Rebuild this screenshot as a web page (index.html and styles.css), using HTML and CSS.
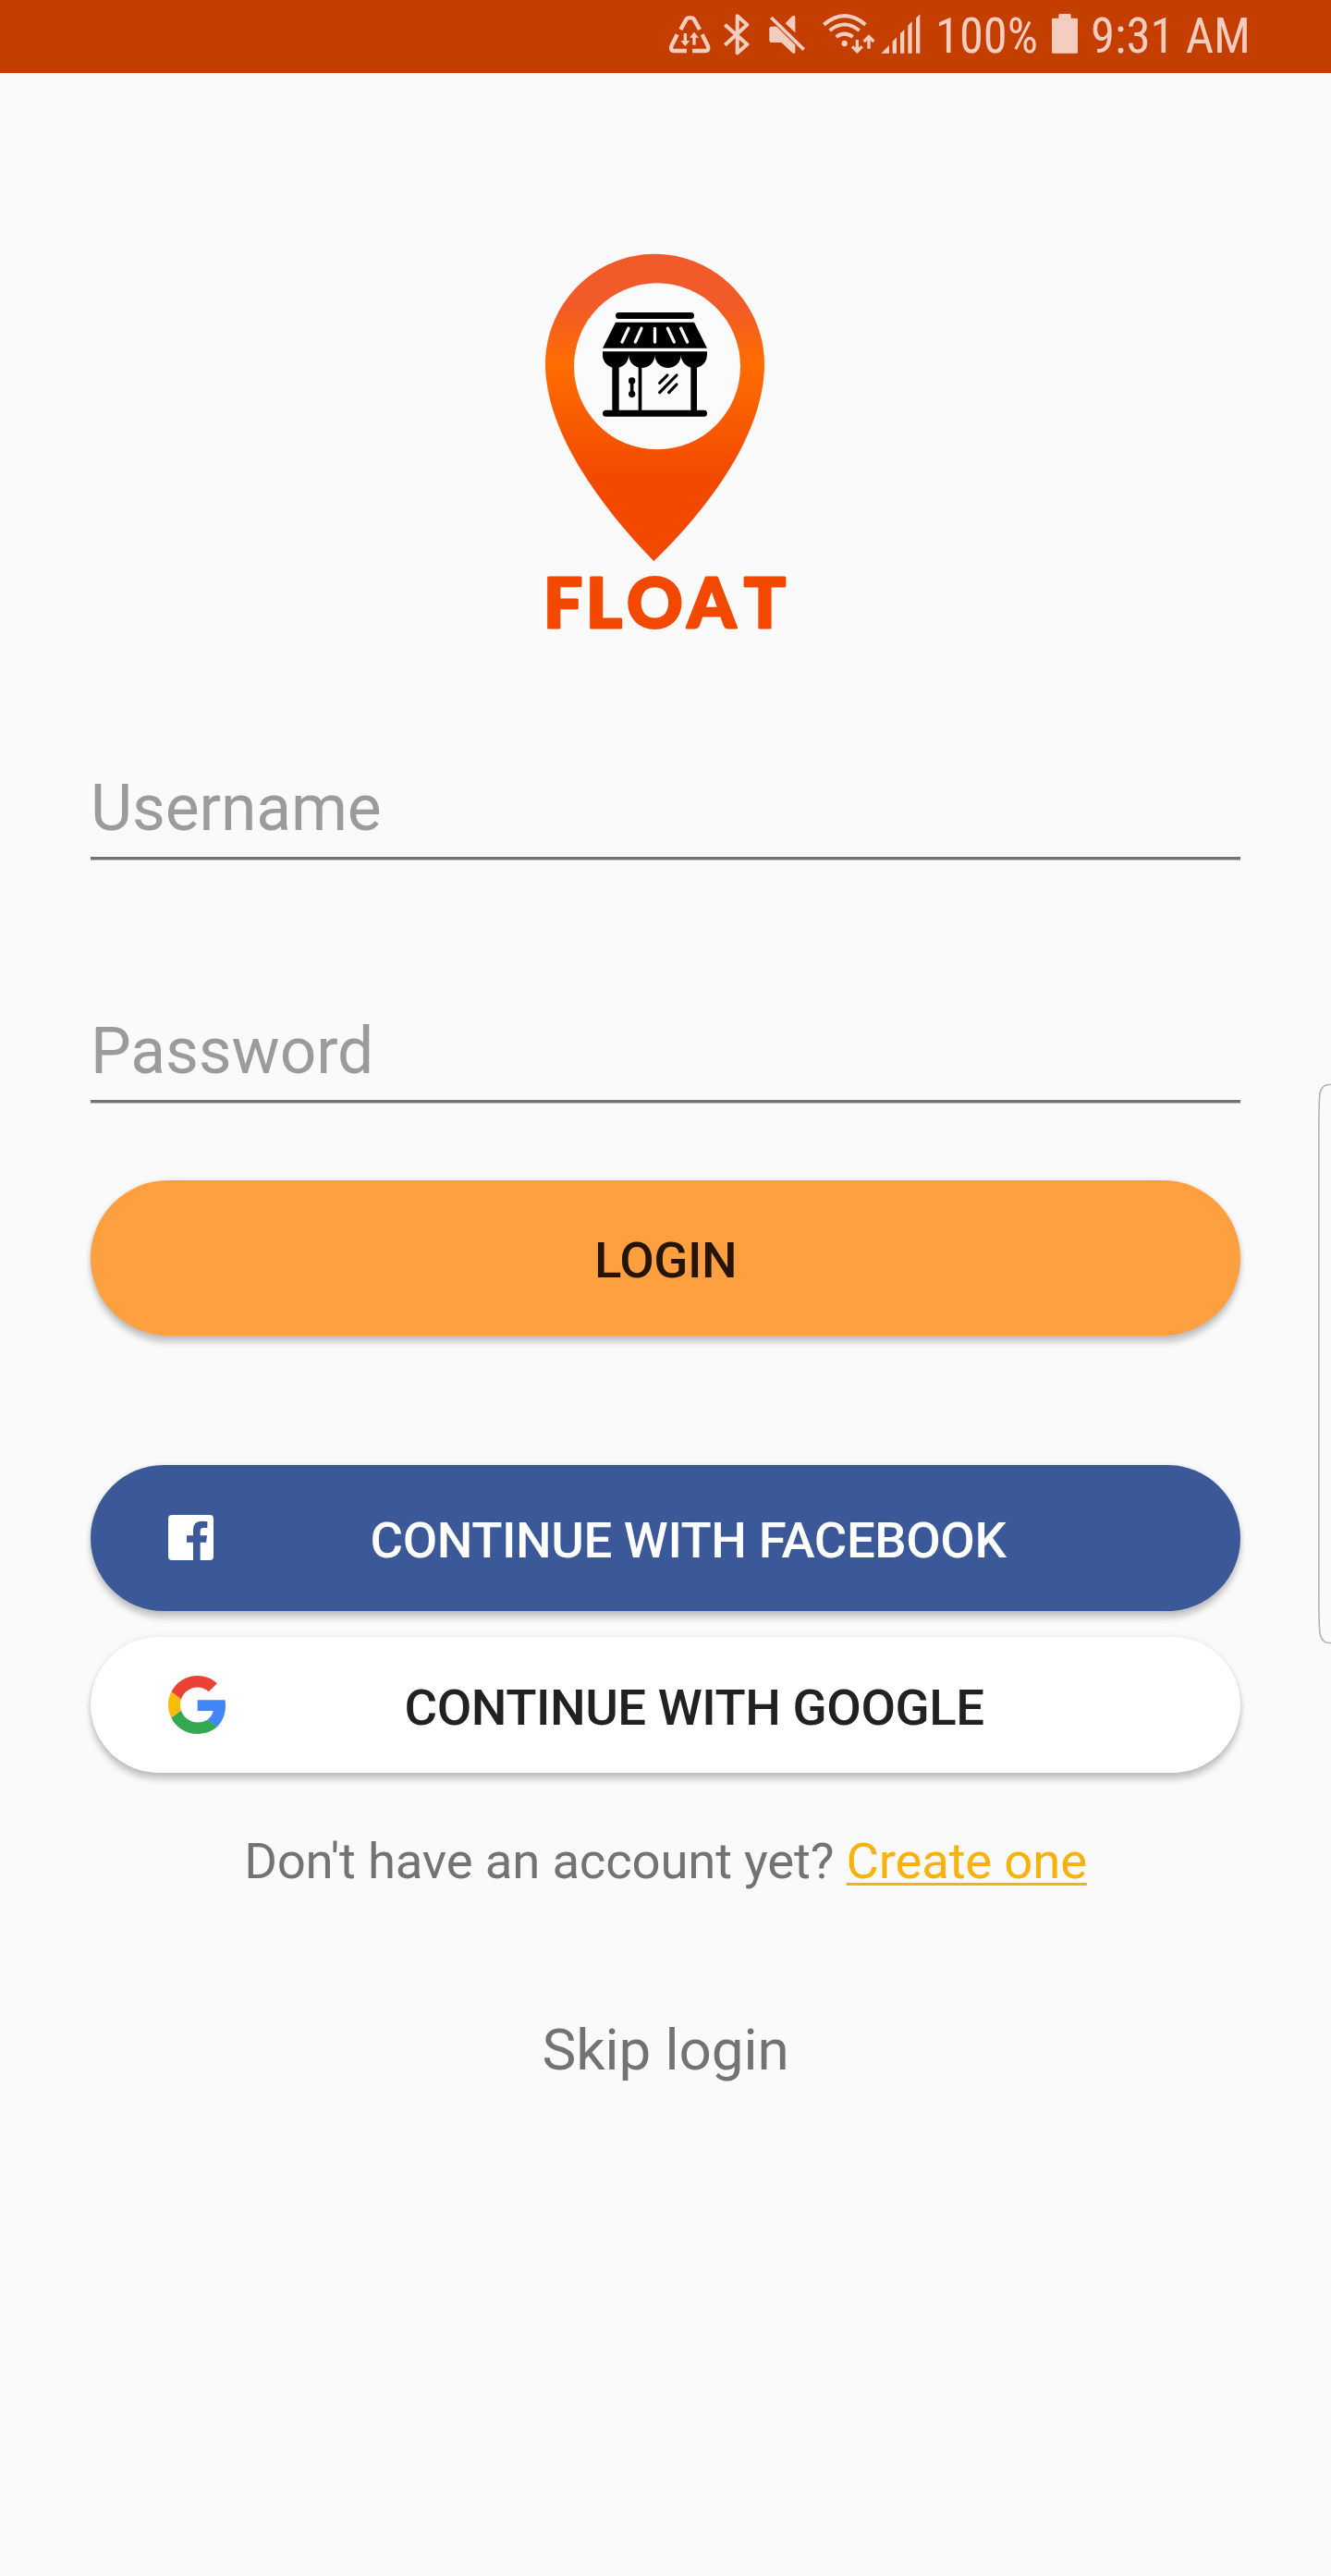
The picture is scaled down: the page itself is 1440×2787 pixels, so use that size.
FILE: index.html
```html
<!DOCTYPE html>
<html lang="en">
<head>
<meta charset="utf-8">
<title>Float</title>
<link rel="stylesheet" href="styles.css">
</head>
<body>
<header class="status-bar">
  <svg class="status-icon" width="59" height="79" viewBox="72 0 177 237" fill="none" stroke="currentColor" stroke-width="13">
    <path d="M109 96 128 62Q130 58 134 58H146Q150 58 152 62L171 96M98 112 80 148Q74 165 88 165H129M179 112 197 148Q203 165 189 165H147"/>
    <path d="M124 108V138M153 146V118" stroke-width="10"/>
    <path d="M109 132H139L124 150ZM138 122H168L153 104Z" fill="currentColor" stroke="none"/>
  </svg>
  <svg class="status-icon" width="49" height="79" viewBox="249 0 147 237" fill="none" stroke="currentColor" stroke-width="12" stroke-linejoin="round">
    <path d="M253 80 325 144 293 172V52L325 80 253 146"/>
  </svg>
  <svg class="status-icon" width="58" height="79" viewBox="396 0 174 237" fill="currentColor">
    <path d="M404 86H421L481 146V170Q478 177 472 172L436 138H404Q397 138 397 131V94Q397 86 404 86ZM449 76 472 52Q481 47 481 56V106Z"/>
    <path d="M403 57 509 161" stroke="currentColor" stroke-width="11"/>
  </svg>
  <svg class="status-icon" width="63" height="79" viewBox="570 0 189 237" fill="none" stroke="currentColor" stroke-width="12">
    <path d="M574 80Q641 23 709 80M593 99Q641 60 689 99M614 120Q641 100 668 120"/>
    <circle cx="641" cy="141" r="9.5" fill="currentColor" stroke="none"/>
    <path d="M682 129V166M666 151 682 167 698 151M720 158V120M704 135 720 119 736 135" stroke-width="10"/>
  </svg>
  <svg class="status-icon" width="62" height="79" viewBox="759 0 186 237" fill="currentColor">
    <path d="M760 173 786 147V173ZM797 134 810 121V173H797ZM822 109 835 96V173H822ZM847 83 860 70V173H847ZM873 59 886 46V173H873Z"/>
  </svg>
  <svg class="status-text" width="123" height="79">
    <text x="-3" y="57" textLength="111" lengthAdjust="spacingAndGlyphs">100%</text>
  </svg>
  <svg class="status-icon" width="43" height="79" viewBox="414 0 129 237" fill="currentColor">
    <path d="M418 59H436V49Q436 45 440 45H472Q476 45 476 49V59H494Q498 59 498 63V169Q498 173 494 173H418Q414 173 414 169V63Q414 59 418 59Z"/>
  </svg>
  <svg class="status-text" width="175" height="79">
    <text x="-1" y="57" textLength="173" lengthAdjust="spacingAndGlyphs">9:31 AM</text>
  </svg>
</header>

<main class="login">
  <svg class="logo" width="260" height="430" viewBox="60 42 780 1290">
    <defs>
      <linearGradient id="pin" gradientUnits="userSpaceOnUse" x1="0" y1="44" x2="0" y2="1041">
        <stop offset=".16" stop-color="#f15a29"/>
        <stop offset=".36" stop-color="#ff6d00"/>
        <stop offset=".74" stop-color="#f24800"/>
      </linearGradient>
    </defs>
    <path fill="url(#pin)" d="M415 44C610 44 771 205 771 402 771 620 600 860 412 1041 225 850 60 610 60 402 60 205 220 44 415 44Z"/>
    <circle cx="423" cy="409" r="270" fill="#fbfbfb"/>
    <rect x="288" y="234" width="255" height="21" rx="10.500"/>
    <path d="M288 266H543L585 350H246ZM246 361H585V372A42 42 0 0 1 500.200 372A42 42 0 0 1 415.500 372A42 42 0 0 1 330.800 372A42 42 0 0 1 246 372Z"/>
    <path d="M277 400H299V555H277ZM362 400H373V555H362ZM532 400H552V555H532Z"/>
    <rect x="246" y="551" width="339" height="21" rx="10.500"/>
    <path d="M330 286 309 330M372 286 352 330M415.500 286V330M457 286 478 330M500 286 521 330" stroke="#fbfbfb" stroke-width="10" stroke-linecap="round"/>
    <circle cx="341" cy="456" r="11"/>
    <circle cx="341" cy="499" r="11"/>
    <path d="M341 456V499" stroke="#000" stroke-width="11"/>
    <path d="M431 463 456 438M431 494 486 438M461 494 486 468" stroke="#000" stroke-width="9.500" stroke-linecap="round"/>
    <text class="wordmark" x="54 192 325 521 705" y="1257">FLOAT</text>
  </svg>

  <form class="form">
    <div class="field"><span class="field-hint">Username</span></div>
    <div class="field field-password"><span class="field-hint">Password</span></div>
    <button class="button button-login" type="button"><span class="button-label">LOGIN</span></button>
    <button class="button button-facebook" type="button">
      <svg class="button-icon" width="49" height="49" viewBox="0 0 147 147">
        <path fill="#fff" d="M12 0H135Q147 0 147 12V135Q147 147 135 147H104V89H123L126 67H104V52Q104 42 115 42H127V22Q121 20 111 20 81 20 81 48V67H60V89H81V147H12Q0 147 0 135V12Q0 0 12 0Z"/>
      </svg>
      <span class="button-label">CONTINUE WITH FACEBOOK</span>
    </button>
    <button class="button button-google" type="button">
      <svg class="button-icon" width="62" height="63" viewBox="0 0 46.980 48" preserveAspectRatio="none">
        <path fill="#ea4335" d="M24 9.500c3.540 0 6.710 1.220 9.210 3.600l6.850-6.850C35.900 2.380 30.470 0 24 0 14.620 0 6.510 5.380 2.560 13.220l7.980 6.190C12.430 13.720 17.740 9.500 24 9.500z"/>
        <path fill="#4285f4" d="M46.980 24.550c0-1.570-.15-3.090-.38-4.550H24v9.020h12.940c-.58 2.960-2.260 5.480-4.780 7.180l7.730 6c4.510-4.180 7.090-10.360 7.090-17.650z"/>
        <path fill="#fbbc05" d="M10.530 28.590c-.48-1.450-.76-2.990-.76-4.590s.27-3.140.76-4.590l-7.980-6.190C.92 16.460 0 20.120 0 24c0 3.880.92 7.540 2.560 10.780l7.970-6.190z"/>
        <path fill="#34a853" d="M24 48c6.480 0 11.930-2.130 15.890-5.810l-7.730-6c-2.150 1.450-4.920 2.300-8.160 2.300-6.260 0-11.570-4.220-13.470-9.910l-7.980 6.190C6.510 42.620 14.620 48 24 48z"/>
      </svg>
      <span class="button-label">CONTINUE WITH GOOGLE</span>
    </button>
  </form>

  <p class="signup">Don't have an account yet? <a class="signup-link">Create one</a></p>
  <p class="skip">Skip login</p>
</main>

<svg class="edge-handle" width="16" height="610" viewBox="0 0 16 610" fill="none" stroke="#b3b3b3" stroke-width="1.600">
  <path d="M18 3.500H13Q6 4 4 13 2.800 22 2.800 60V550Q2.800 587 4 597 6 607 13 607.500H18"/>
</svg>
</body>
</html>
```
FILE: styles.css
```css
* { box-sizing: border-box; }

body {
  margin: 0;
  min-height: 2787px;
  background: #fafafa;
  font-family: Roboto, sans-serif;
  color: #212121;
  position: relative;
}

.status-bar {
  display: flex;
  justify-content: flex-end;
  height: 79px;
  padding-right: 84px;
  background: #c43e00;
  color: #f4cdbf;
}

.status-icon,
.status-text { flex: none; display: block; }

.status-text {
  overflow: visible;
  fill: currentColor;
  font-family: "Roboto Condensed", Roboto, sans-serif;
  font-size: 53.500px;
}

.login { padding: 195px 98px 0; }

.logo { display: block; margin-left: 492px; overflow: visible; }

.wordmark {
  font-family: Lato, sans-serif;
  font-weight: 900;
  font-size: 223px;
  fill: #f24800;
  stroke: #f24800;
  stroke-width: 9px;
  stroke-linejoin: round;
}

.form { display: flex; flex-direction: column; padding-top: 129px; }

.field {
  height: 97px;
  border-bottom: 3px solid #737373;
  box-shadow: 0 1px #c0c0c0;
}

.field-password { margin-top: 166px; }

.field-hint {
  display: block;
  font-size: 69.500px;
  line-height: 84px;
  letter-spacing: -.1px;
  color: #9b9b9b;
}

.button {
  display: flex;
  align-items: center;
  border: 0;
  padding: 0 84px;
  border-radius: 84px;
  font: 500 54.500px/66px Roboto, sans-serif;
  letter-spacing: -.45px;
  color: inherit;
  box-shadow: 0 7px 7px rgba(0, 0, 0, .21), 0 0 5px rgba(0, 0, 0, .1);
}

.button-label { flex: 1; text-align: center; padding-top: 3px; white-space: nowrap; }
.button-icon { flex: none; display: block; }

.button-login { height: 168px; margin-top: 84px; background: #ffa040; color: #251400; }
.button-facebook { height: 158px; margin-top: 140px; background: #3b5998; color: #fff; }
.button-facebook .button-icon { margin-bottom: 1px; }
.button-google { height: 147px; margin-top: 28px; background: #fff; }
.button-google .button-label { padding-top: 5px; }

.signup,
.skip { margin: 0; text-align: center; color: #737373; white-space: nowrap; }

.signup { padding-top: 62px; font-size: 54.500px; line-height: 66px; letter-spacing: -.2px; }
.signup-link { color: #f9b10c; text-decoration: underline; text-decoration-thickness: 3px; text-underline-offset: 5px; }
.skip { padding-top: 135px; font-size: 62px; line-height: 74px; letter-spacing: -.1px; }

.edge-handle { position: absolute; right: 0; top: 1170px; }
```
